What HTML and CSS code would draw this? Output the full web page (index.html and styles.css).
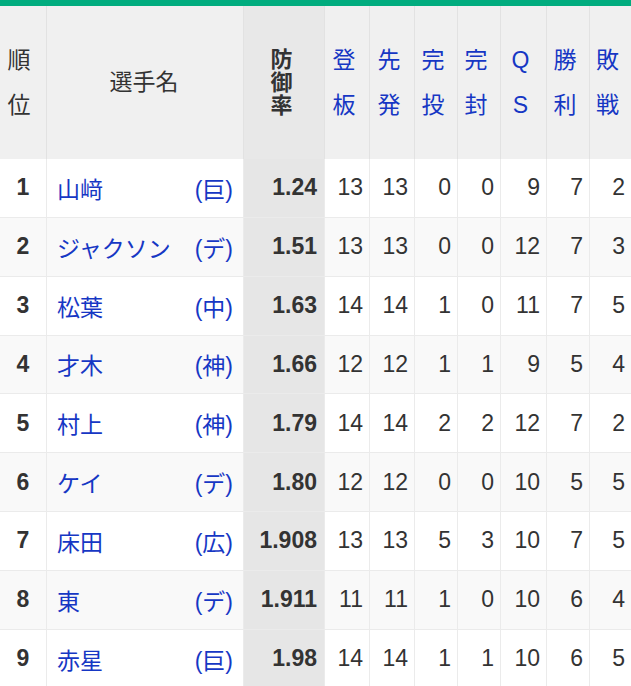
FILE: index.html
```html
<!DOCTYPE html>
<html lang="ja">
<head>
<meta charset="utf-8">
<title>防御率ランキング</title>
<link rel="stylesheet" href="styles.css">
</head>
<body>
<div class="topbar"></div>
<div class="ranking">
  <div class="row head">
    <div class="cell h-rank">順<br>位</div>
    <div class="cell h-name">選手名</div>
    <div class="cell h-era"><span class="stack">防</span><span class="stack">御</span><span class="stack">率</span></div>
    <div class="cell h-sort">登<br>板</div>
    <div class="cell h-sort">先<br>発</div>
    <div class="cell h-sort">完<br>投</div>
    <div class="cell h-sort">完<br>封</div>
    <div class="cell h-sort">Q<br>S</div>
    <div class="cell h-sort">勝<br>利</div>
    <div class="cell h-sort">敗<br>戦</div>
  </div>
  <div class="body">
    <div class="row"><div class="cell rank">1</div><div class="cell name"><span>山﨑</span><span>(巨)</span></div><div class="cell era">1.24</div><div class="cell num">13</div><div class="cell num">13</div><div class="cell num">0</div><div class="cell num">0</div><div class="cell num">9</div><div class="cell num">7</div><div class="cell num">2</div></div>
    <div class="row"><div class="cell rank">2</div><div class="cell name"><span>ジャクソン</span><span>(デ)</span></div><div class="cell era">1.51</div><div class="cell num">13</div><div class="cell num">13</div><div class="cell num">0</div><div class="cell num">0</div><div class="cell num">12</div><div class="cell num">7</div><div class="cell num">3</div></div>
    <div class="row"><div class="cell rank">3</div><div class="cell name"><span>松葉</span><span>(中)</span></div><div class="cell era">1.63</div><div class="cell num">14</div><div class="cell num">14</div><div class="cell num">1</div><div class="cell num">0</div><div class="cell num">11</div><div class="cell num">7</div><div class="cell num">5</div></div>
    <div class="row"><div class="cell rank">4</div><div class="cell name"><span>才木</span><span>(神)</span></div><div class="cell era">1.66</div><div class="cell num">12</div><div class="cell num">12</div><div class="cell num">1</div><div class="cell num">1</div><div class="cell num">9</div><div class="cell num">5</div><div class="cell num">4</div></div>
    <div class="row"><div class="cell rank">5</div><div class="cell name"><span>村上</span><span>(神)</span></div><div class="cell era">1.79</div><div class="cell num">14</div><div class="cell num">14</div><div class="cell num">2</div><div class="cell num">2</div><div class="cell num">12</div><div class="cell num">7</div><div class="cell num">2</div></div>
    <div class="row"><div class="cell rank">6</div><div class="cell name"><span>ケイ</span><span>(デ)</span></div><div class="cell era">1.80</div><div class="cell num">12</div><div class="cell num">12</div><div class="cell num">0</div><div class="cell num">0</div><div class="cell num">10</div><div class="cell num">5</div><div class="cell num">5</div></div>
    <div class="row"><div class="cell rank">7</div><div class="cell name"><span>床田</span><span>(広)</span></div><div class="cell era">1.908</div><div class="cell num">13</div><div class="cell num">13</div><div class="cell num">5</div><div class="cell num">3</div><div class="cell num">10</div><div class="cell num">7</div><div class="cell num">5</div></div>
    <div class="row"><div class="cell rank">8</div><div class="cell name"><span>東</span><span>(デ)</span></div><div class="cell era">1.911</div><div class="cell num">11</div><div class="cell num">11</div><div class="cell num">1</div><div class="cell num">0</div><div class="cell num">10</div><div class="cell num">6</div><div class="cell num">4</div></div>
    <div class="row"><div class="cell rank">9</div><div class="cell name"><span>赤星</span><span>(巨)</span></div><div class="cell era">1.98</div><div class="cell num">14</div><div class="cell num">14</div><div class="cell num">1</div><div class="cell num">1</div><div class="cell num">10</div><div class="cell num">6</div><div class="cell num">5</div></div>
  </div>
</div>
</body>
</html>
```
FILE: styles.css
```css
html, body {
  margin: 0;
  padding: 0;
  background: #ffffff;
}
body {
  width: 631px;
  font-family: "Liberation Sans", "Noto Sans CJK JP", sans-serif;
  font-size: 23px;
  color: #333333;
  overflow: hidden;
}
.topbar {
  height: 6px;
  background: #00ac7e;
}
.row {
  display: grid;
  grid-template-columns: 46px 196px 80px 44px 44px 42px 42px 45px 42px 41px;
  column-gap: 1px;
  background: #ebebeb;
  height: 57.85px;
}
.cell {
  display: flex;
  align-items: center;
  background: #ffffff;
  white-space: nowrap;
}
.head {
  height: 153px;
  background: #e2e2e2;
}
.head .cell {
  background: #f0f0f0;
  justify-content: center;
  text-align: center;
  padding-right: 6px;
  line-height: 45px;
}
.head .h-rank {
  padding-right: 8px;
}
.head .h-name {
  padding-right: 2px;
}
.head .h-era {
  flex-direction: column;
  background: #e8e8e8;
  font-weight: bold;
  padding-right: 5px;
}
.head .h-era .stack {
  display: block;
  font-size: 22px;
  line-height: 23px;
  height: 23px;
}
.head .h-sort {
  color: #1637c4;
}
.body {
  display: flex;
  flex-direction: column;
  row-gap: 1px;
  background: #ebebeb;
}
.body .row:nth-child(even) .cell {
  background: #f9f9f9;
}
.rank {
  justify-content: center;
  font-weight: bold;
}
.name {
  justify-content: space-between;
  padding: 0 10px 0 10px;
  color: #1637c4;
}
.body .row .cell.era {
  background: #e6e6e6;
  justify-content: flex-end;
  padding-right: 7px;
  font-weight: bold;
}
.num {
  justify-content: flex-end;
  padding-right: 6px;
}
```
